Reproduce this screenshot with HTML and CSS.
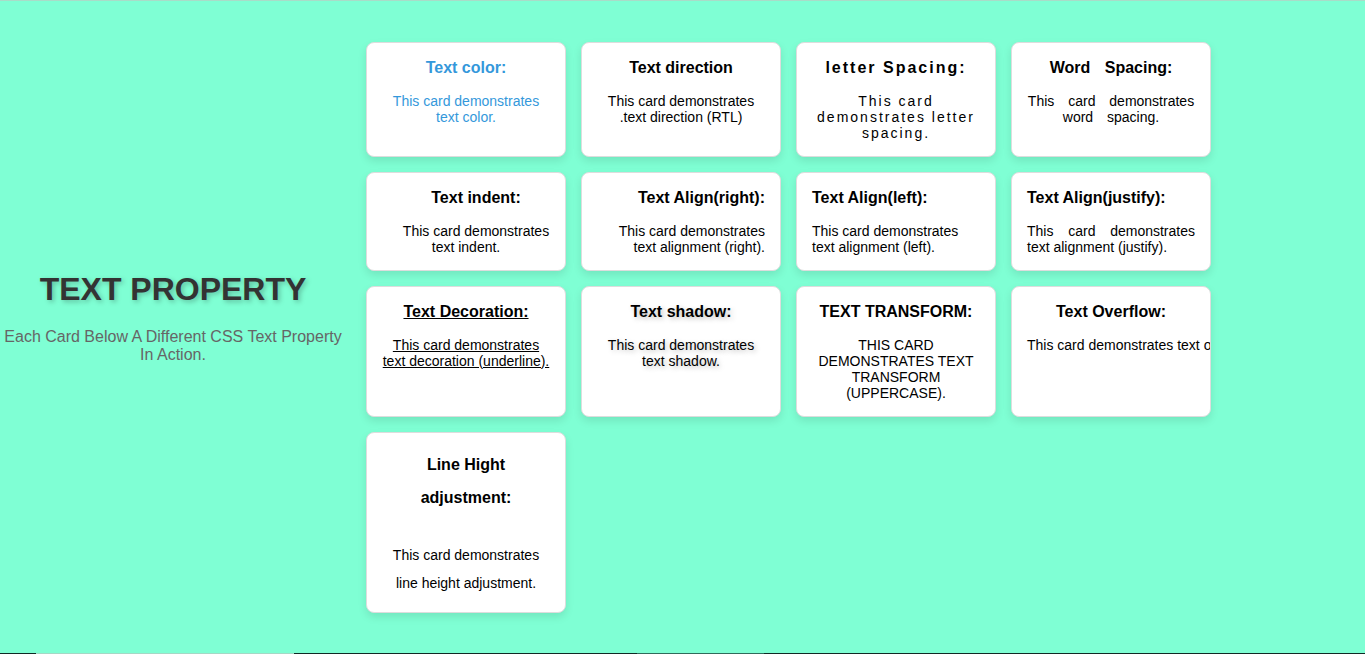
FILE: index.html
```html
<!DOCTYPE html>
<html lang="en">
<head>
  <meta charset="utf-8">
  <title>Text Property</title>
  <link rel="stylesheet" href="styles.css">
</head>
<body>
  <main class="container">
    <header class="intro">
      <h1 class="intro-title">Text Property</h1>
      <p class="intro-text">Each card below a different CSS text property in action.</p>
    </header>
    <section class="cards">
      <article class="card text-color">
        <h3>Text color:</h3>
        <p>This card demonstrates text color.</p>
      </article>
      <article class="card text-direction">
        <h3>Text direction</h3>
        <p>This card demonstrates text direction (RTL).</p>
      </article>
      <article class="card letter-spacing">
        <h3>letter Spacing:</h3>
        <p>This card demonstrates letter spacing.</p>
      </article>
      <article class="card word-spacing">
        <h3>Word Spacing:</h3>
        <p>This card demonstrates word spacing.</p>
      </article>
      <article class="card text-indent">
        <h3>Text indent:</h3>
        <p>This card demonstrates text indent.</p>
      </article>
      <article class="card align-right">
        <h3>Text Align(right):</h3>
        <p>This card demonstrates text alignment (right).</p>
      </article>
      <article class="card align-left">
        <h3>Text Align(left):</h3>
        <p>This card demonstrates text alignment (left).</p>
      </article>
      <article class="card align-justify">
        <h3>Text Align(justify):</h3>
        <p>This card demonstrates text alignment (justify).</p>
      </article>
      <article class="card text-decoration">
        <h3>Text Decoration:</h3>
        <p>This card demonstrates text decoration (underline).</p>
      </article>
      <article class="card text-shadow">
        <h3>Text shadow:</h3>
        <p>This card demonstrates text shadow.</p>
      </article>
      <article class="card text-transform">
        <h3>Text Transform:</h3>
        <p>This card demonstrates text transform (uppercase).</p>
      </article>
      <article class="card text-overflow">
        <h3>Text Overflow:</h3>
        <p>This card demonstrates text overflow.</p>
      </article>
      <article class="card line-height">
        <h3>Line Hight adjustment:</h3>
        <p>This card demonstrates line height adjustment.</p>
      </article>
    </section>
  </main>
  <div class="bottom-edge"></div>
</body>
</html>
```

FILE: styles.css
```css
* {
  margin: 0;
  padding: 0;
  box-sizing: border-box;
}

body {
  display: flex;
  flex-direction: column;
  min-height: 100vh;
  border-top: 1px solid #a9dcc8;
  background: #7fffd4;
  font-family: Arial, "Liberation Sans", sans-serif;
}

.container {
  flex: 1;
  display: flex;
  align-items: center;
}

.intro {
  flex: 0 0 346px;
  text-align: center;
}

.intro-title {
  margin-bottom: 20px;
  color: #333;
  font-size: 32px;
  line-height: 37px;
  text-transform: uppercase;
  text-shadow: 2px 2px 5px rgba(0, 0, 0, 0.25);
}

.intro-text {
  margin-bottom: 20px;
  color: #666;
  font-size: 16px;
  line-height: 18px;
  text-transform: capitalize;
}

.cards {
  flex: 1;
  display: grid;
  grid-template-columns: repeat(auto-fill, 200px);
  gap: 15px;
  padding: 20px;
}

.card {
  padding: 15px;
  border: 1px solid #ddd;
  border-radius: 8px;
  background: #fff;
  box-shadow: 0 4px 8px rgba(0, 0, 0, 0.1);
  color: #000;
  font-size: 14px;
  line-height: 16px;
  text-align: center;
}

.card h3 {
  margin-bottom: 15px;
  font-size: 16px;
  line-height: 20px;
}

.text-color {
  color: #3498db;
}

.text-direction {
  direction: rtl;
}

.letter-spacing {
  letter-spacing: 2px;
}

.word-spacing {
  word-spacing: 10px;
}

.text-indent {
  text-indent: 20px;
}

.align-right {
  text-align: right;
}

.align-left {
  text-align: left;
}

.align-justify {
  text-align: justify;
}

.text-decoration {
  text-decoration: underline;
}

.text-shadow {
  text-shadow: 2px 2px 5px rgba(0, 0, 0, 0.25);
}

.text-transform {
  text-transform: uppercase;
}

.text-overflow {
  overflow: hidden;
  white-space: nowrap;
}

.card.line-height {
  line-height: 28px;
}

.card.line-height h3 {
  margin-bottom: 27px;
  line-height: 33px;
}

.bottom-edge {
  height: 1px;
  background: linear-gradient(
    to right,
    #102a24 0 36px,
    #a5d8c5 36px 294px,
    #102a24 294px 637px,
    #2f6b5a 637px 764px,
    #102a24 764px
  );
}
```
